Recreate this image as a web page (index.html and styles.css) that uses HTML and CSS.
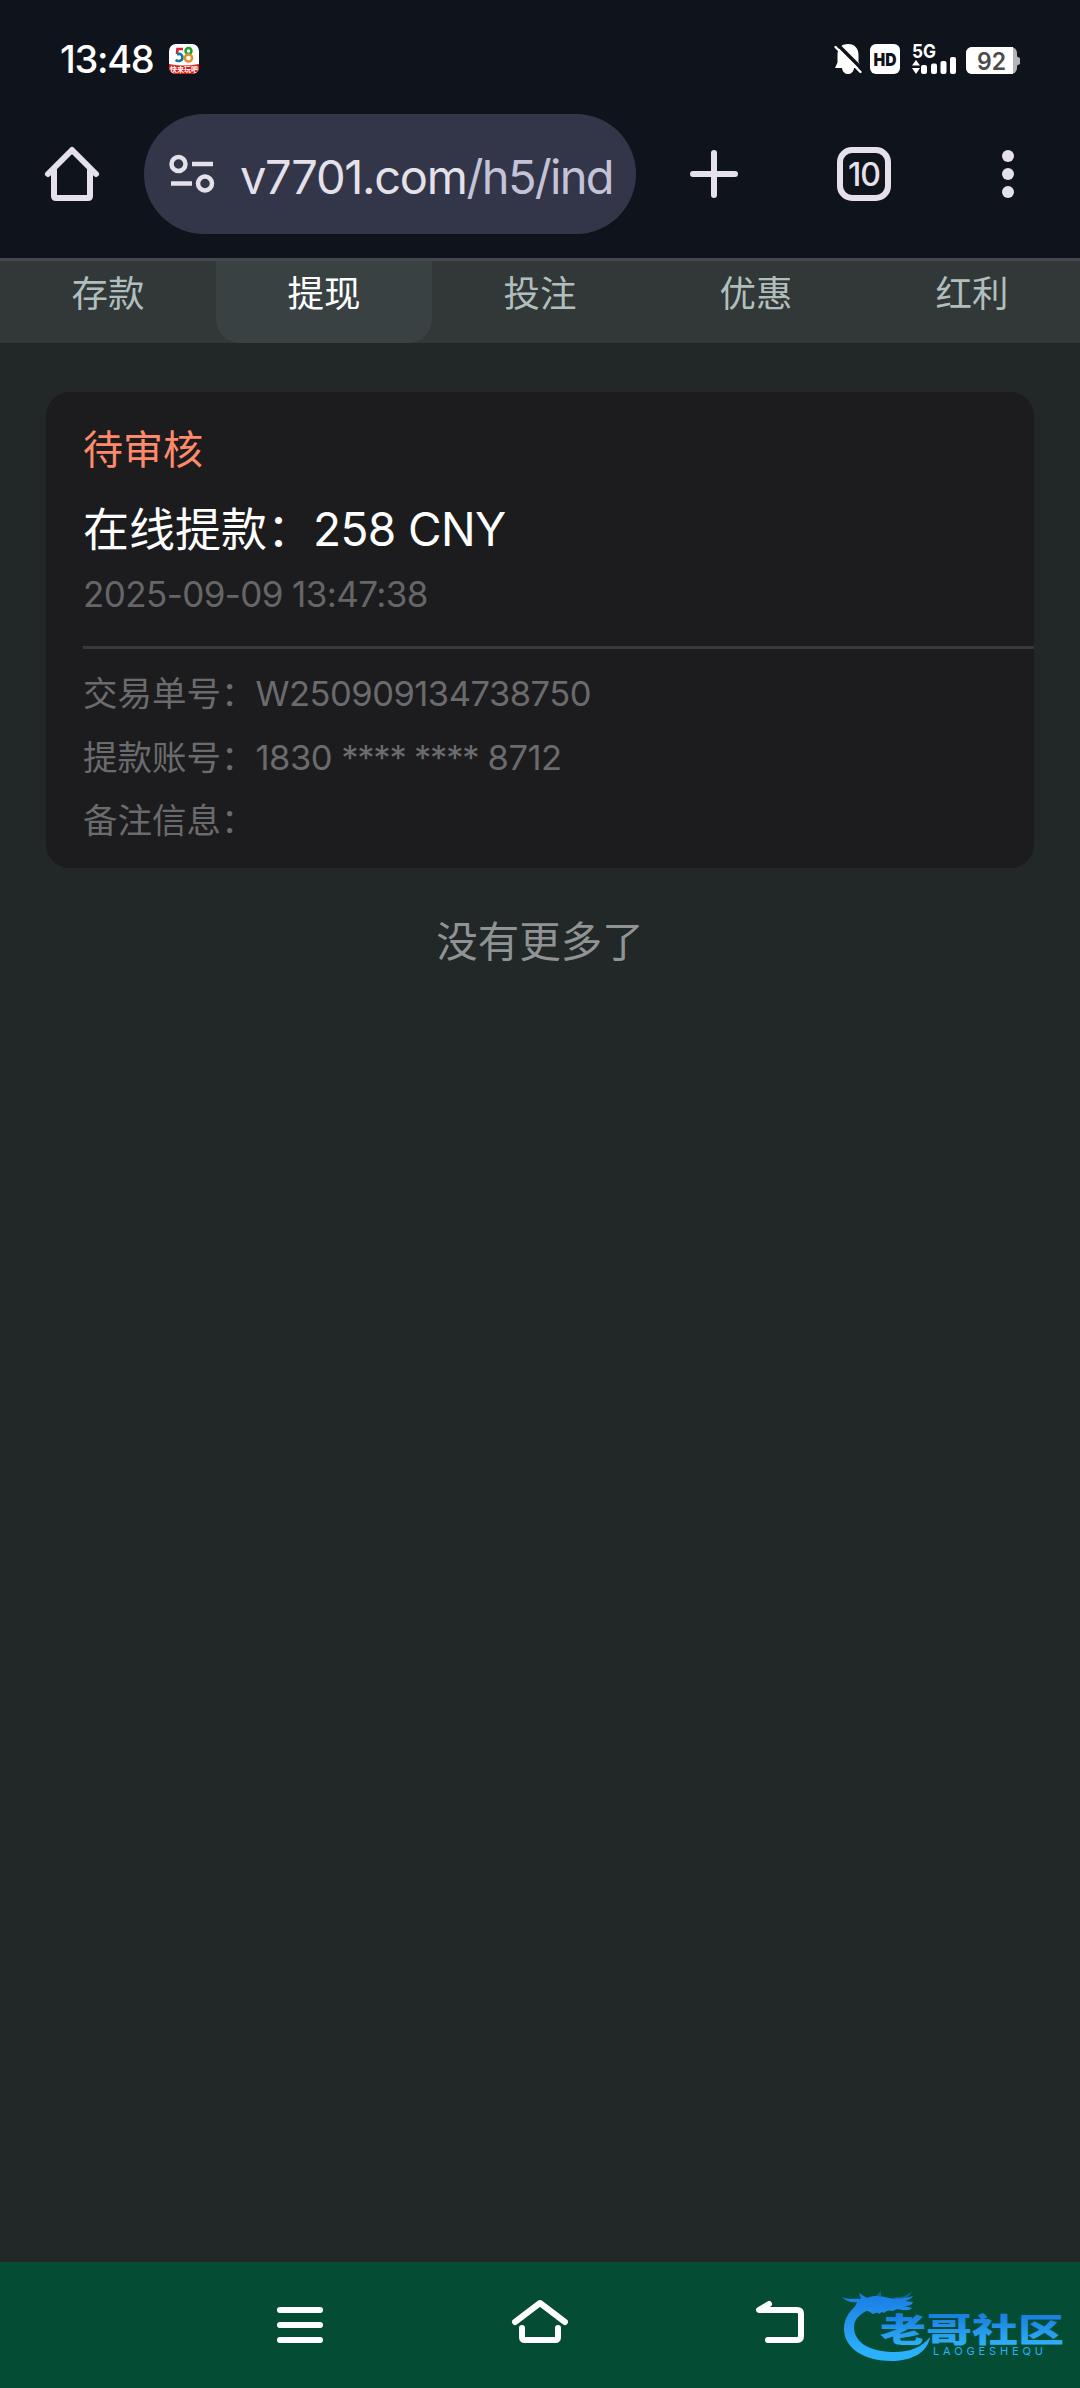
FILE: index.html
```html
<!DOCTYPE html>
<html lang="zh-CN">
<head>
    <meta charset="UTF-8">
    <meta name="viewport" content="width=device-width, initial-scale=1.0">
    <title>交易记录</title>
    <link rel="stylesheet" href="styles.css">
</head>
<body>
    <div class="status-bar">
        <span class="clock">13:48</span>
        <svg class="app-icon" width="30" height="30" viewBox="0 0 30 30">
            <defs>
                <clipPath id="app-clip"><rect width="30" height="30" rx="7"/></clipPath>
            </defs>
            <g clip-path="url(#app-clip)">
                <rect width="30" height="30" fill="#fff"/>
                <path d="M14 5H8.5L8 10" fill="none" stroke="#d8232f" stroke-width="2.6"/>
                <path d="M8 10.5c3-1.5 5.5 0 5.5 3 0 3.5-4 4.5-7 2.5" fill="none" stroke="#14789c" stroke-width="2.6"/>
                <circle cx="19.5" cy="7" r="3" fill="none" stroke="#18a330" stroke-width="2.5"/>
                <circle cx="19.5" cy="14" r="3.6" fill="none" stroke="#e2902a" stroke-width="2.5"/>
                <path d="M0 20q15 3 30 0v10H0z" fill="#e01b12"/>
                <text x="15" y="27.5" class="app-text" text-anchor="middle">快来玩吧</text>
            </g>
        </svg>
        <div class="status-icons">
            <svg class="bell" width="28" height="32" viewBox="0 0 28 32">
                <path d="M14 1c7 0 10.5 5 10.5 10.5V19l3 6H1l2.5-5.5V11.5C3.500 6 7 1 14 1z" fill="#fff"/>
                <path d="M8 25h12c-1 8-11 8-12 0z" fill="#fff"/>
                <path d="M3 1l27 27" stroke="#0f131b" stroke-width="3.5"/>
                <path d="M1.5 4l25 25" stroke="#fff" stroke-width="2.4" stroke-linecap="round"/>
            </svg>
            <svg class="hd" width="30" height="30" viewBox="0 0 30 30">
                <rect width="30" height="30" rx="6" fill="#fff"/>
                <text x="15" y="21.5" class="hd-text" text-anchor="middle" textLength="23" lengthAdjust="spacingAndGlyphs">HD</text>
            </svg>
            <svg class="signal" width="46" height="32" viewBox="0 0 46 32">
                <text x="0" y="15" class="net-text" textLength="24" lengthAdjust="spacingAndGlyphs">5G</text>
                <path d="M0 22.5l4-5.500 4 5.500zM0 25h8l-4 6z" fill="#fff"/>
                <rect x="9" y="22" width="6" height="9" rx="2" fill="#fff"/>
                <rect x="19" y="20.5" width="6" height="10.5" rx="2" fill="#fff"/>
                <rect x="28.5" y="18" width="6" height="13" rx="2" fill="#fff"/>
                <rect x="38" y="14" width="6" height="17" rx="2" fill="#fff"/>
            </svg>
            <svg class="battery" width="54" height="28" viewBox="0 0 54 28">
                <path d="M50 9l4 2v6l-4 2z" fill="#b3b4b7"/>
                <rect width="51" height="27" rx="6" fill="#b3b4b7"/>
                <path d="M6 0h41v27H6a6 6 0 0 1-6-6V6a6 6 0 0 1 6-6z" fill="#fff"/>
                <text x="25.5" y="22.5" class="battery-text" text-anchor="middle" textLength="29" lengthAdjust="spacingAndGlyphs">92</text>
            </svg>
        </div>
    </div>

    <div class="toolbar">
        <svg class="home" width="56" height="56" viewBox="0 0 56 56" fill="none" stroke="#e5e1eb" stroke-width="6" stroke-linecap="round" stroke-linejoin="round">
            <path d="M4 28L28 4l24 24M10 24v26q0 2 2 2h32q2 0 2-2V24"/>
        </svg>
        <div class="url-bar">
            <svg width="48" height="40" viewBox="0 0 48 40" fill="none" stroke="#e5e1eb">
                <circle cx="10.5" cy="10" r="7" stroke-width="4.5"/>
                <path d="M24 10h21M3 29.5h21" stroke-width="4.5"/>
                <circle cx="37" cy="29.5" r="7" stroke-width="4.5"/>
            </svg>
            <div class="url">v7701.com<span class="path">/h5/ind</span></div>
        </div>
        <svg class="plus" width="48" height="48" viewBox="0 0 48 48" stroke="#e5e1eb" stroke-width="6" stroke-linecap="round">
            <path d="M24 3v42M3 24h42"/>
        </svg>
        <div class="tab-count">10</div>
        <svg class="dots" width="12" height="48" viewBox="0 0 12 48" fill="#e5e1eb">
            <circle cx="6" cy="6" r="6"/>
            <circle cx="6" cy="24" r="6"/>
            <circle cx="6" cy="42" r="6"/>
        </svg>
    </div>

    <div class="tabs">
        <div class="tab">存款</div>
        <div class="tab active">提现</div>
        <div class="tab">投注</div>
        <div class="tab">优惠</div>
        <div class="tab">红利</div>
    </div>

    <div class="content">
        <div class="card">
            <div class="card-status">待审核</div>
            <div class="card-title">在线提款：<span class="amount">258 CNY</span></div>
            <div class="card-time">2025-09-09 13:47:38</div>
            <div class="card-details">
                <div class="detail-row">交易单号：<span class="value">W250909134738750</span></div>
                <div class="detail-row">提款账号：<span class="value">1830 <span class="mask">**** ****</span> 8712</span></div>
                <div class="detail-row">备注信息：</div>
            </div>
        </div>
        <div class="no-more">没有更多了</div>
    </div>

    <div class="nav-bar">
        <svg width="50" height="50" viewBox="0 0 50 50" fill="none" stroke="#fff" stroke-width="6" stroke-linecap="round">
            <path d="M5 10h40M5 25h40M5 40h40"/>
        </svg>
        <svg width="60" height="50" viewBox="0 0 60 50" fill="none" stroke="#fff" stroke-width="6" stroke-linecap="round" stroke-linejoin="round">
            <path d="M5 22L30 3l25 19M12 28v9q0 3 3 3h30q3 0 3-3v-9"/>
        </svg>
        <svg width="50" height="50" viewBox="0 0 50 50" fill="none" stroke="#fff" stroke-width="6" stroke-linecap="round" stroke-linejoin="round">
            <path d="M14 4L4 10h38q4 0 4 4v22q0 4-4 4H13"/>
        </svg>
    </div>

    <!-- site watermark -->
    <svg class="watermark" width="230" height="84" viewBox="0 0 230 84">
        <defs>
            <linearGradient id="wm" x1="0" y1="0" x2="0" y2="84" gradientUnits="userSpaceOnUse">
                <stop offset="0.2" stop-color="#1a80e6"/>
                <stop offset="0.6" stop-color="#279cf0"/>
                <stop offset="0.85" stop-color="#2bb0fb"/>
            </linearGradient>
            <linearGradient id="wm-title" x1="0" y1="-36" x2="0" y2="4" gradientUnits="userSpaceOnUse">
                <stop offset="0" stop-color="#1a7fe0"/>
                <stop offset="1" stop-color="#2fb0f5"/>
            </linearGradient>
        </defs>
        <g fill="url(#wm)">
            <path d="M24 21C10 28 4 38 4 49c0 19 20 32 48 32 20 0 36-9 38-24-8 10-20 15-35 15-26 0-41-10-41-25 0-8 7-15 18-18z"/>
            <path d="M2 17c7 3 12 1 19 2l-2-6 8 5c7-3 14-2 22 0 7 1 14 1 24-2-2 3-5 4-8 5l8 1c-1 3-4 4-9 4l8 2c-3 3-6 2-10 2-3-1-6-1-9 1-3-1-6-1-9 2-1-1-3-1-5 1-1-2-3-1-6 0l-5-3c-8-2-14 3-19 9l8-18c-6 1-11-1-15-5z"/>
            <path d="M36 16l5-5v5zM54 17c8 1 14-2 18-6-3 7-8 9-15 9z" opacity="0.5"/>
            <text transform="translate(40 62) scale(1 0.74)" class="wm-text" fill="url(#wm-title)" textLength="184" lengthAdjust="spacingAndGlyphs">老哥社区</text>
            <text x="93" y="75" class="wm-latin" textLength="110">LAOGESHEQU</text>
        </g>
    </svg>
</body>
</html>
```
FILE: styles.css
```css
* {
    margin: 0;
    padding: 0;
    box-sizing: border-box;
}

body {
    font-family: Inter, 'Noto Sans CJK SC', sans-serif;
    background: #222727;
    color: #fff;
    width: 1080px;
    height: 2388px;
    display: flex;
    flex-direction: column;
    overflow: hidden;
    position: relative;
}

svg {
    display: block;
    flex-shrink: 0;
    overflow: visible;
}

.status-bar {
    height: 114px;
    padding: 0 60px;
    background: #0f131b;
    display: flex;
    align-items: flex-start;
}

.clock {
    width: 96px;
    margin-top: 36px;
    font-size: 38px;
    line-height: 46px;
    font-weight: 500;
    letter-spacing: -1.3px;
    white-space: nowrap;
}

.app-icon {
    margin: 44px 0 0 13px;
}

.app-text {
    font-size: 7px;
    font-weight: 700;
    fill: #fff;
}

.status-icons {
    margin: 43px 0 0 auto;
    display: flex;
    align-items: flex-start;
}

.hd {
    margin: 1px 12px 0 8px;
}

.hd-text {
    font-size: 18px;
    font-weight: 900;
    fill: #0f131b;
}

.net-text {
    font-size: 19px;
    font-weight: 700;
    fill: #fff;
}

.battery {
    margin: 4px 0 0 8px;
}

.battery-text {
    font-size: 24px;
    font-weight: 600;
    fill: #4b4b4b;
}

.toolbar {
    height: 144px;
    padding: 0 66px 0 44px;
    background: #0f131b;
    display: flex;
    align-items: flex-start;
}

.home {
    margin-top: 32px;
}

.url-bar {
    width: 492px;
    height: 120px;
    margin-left: 44px;
    padding: 0 24px;
    border-radius: 60px;
    background: #333649;
    display: flex;
    align-items: center;
}

.url {
    width: 372px;
    margin-left: 24px;
    font-size: 47px;
    line-height: 70px;
    padding-top: 6px;
    letter-spacing: -1.3px;
    color: #e5e1eb;
    white-space: nowrap;
    overflow: hidden;
}

.path {
    color: #c3c3d8;
    letter-spacing: -1.7px;
}

.plus {
    margin: 36px 0 0 54px;
}

.tab-count {
    width: 54px;
    height: 54px;
    margin: 33px 0 0 99px;
    border: 6px solid #e5e1eb;
    border-radius: 15px;
    font-size: 32px;
    line-height: 43px;
    font-weight: 500;
    letter-spacing: -1px;
    text-align: center;
    color: #e5e1eb;
}

.dots {
    margin: 36px 0 0 auto;
}

.tabs {
    height: 85px;
    border-top: 3px solid #46464f;
    background: #313837;
    display: flex;
}

.tab {
    flex: 1;
    height: 82px;
    line-height: 67px;
    text-align: center;
    font-size: 36.5px;
    color: #b0bfbd;
}

.tab.active {
    background: #3a4143;
    color: #fff;
    border-radius: 0 0 24px 24px;
}

.content {
    flex: 1;
    padding: 49px 46px 0;
}

.card {
    height: 476px;
    padding: 29px 0 0 37px;
    border-radius: 24px;
    background: #1c1c1e;
}

.card-status {
    font-size: 40px;
    line-height: 58px;
    color: #ff8a6b;
}

.card-title {
    margin-top: 17px;
    font-size: 46px;
    line-height: 66px;
}

.amount {
    letter-spacing: -0.6px;
}

.card-time {
    margin-top: 6px;
    height: 81px;
    font-size: 35px;
    line-height: 52px;
    letter-spacing: -0.6px;
    color: #666668;
    border-bottom: 3px solid #39393b;
}

.card-details {
    padding-top: 13px;
    font-size: 34.5px;
    color: #6b6b6d;
}

.detail-row {
    line-height: 63.5px;
}

.value {
    letter-spacing: -0.5px;
}

.mask {
    letter-spacing: -1.2px;
}

.no-more {
    margin-top: 44px;
    text-align: center;
    font-size: 41.5px;
    line-height: 60px;
    color: #909393;
}

.nav-bar {
    height: 126px;
    padding: 38px 275px 0;
    background: #044c33;
    display: flex;
    justify-content: space-between;
}

.watermark {
    position: absolute;
    left: 840px;
    top: 2280px;
}

.wm-text {
    font-family: 'Noto Sans CJK SC', sans-serif;
    font-size: 44px;
    font-weight: 900;
}

.wm-latin {
    font-size: 11px;
    font-weight: 400;
}
```
